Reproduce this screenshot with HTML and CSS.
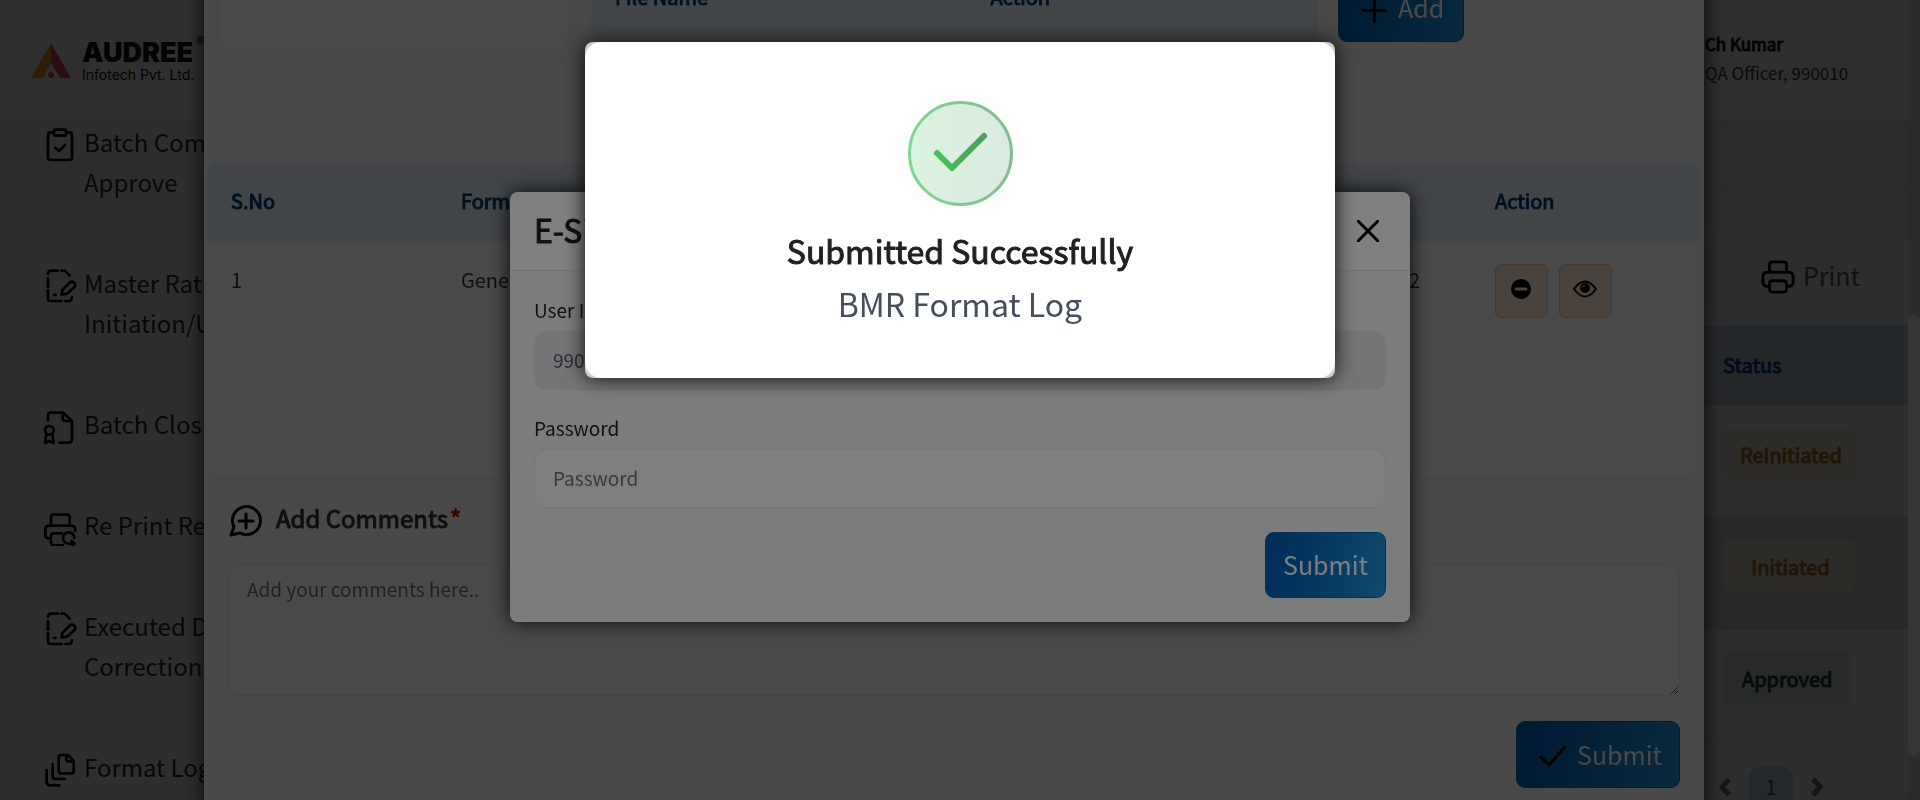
FILE: index.html
```html
<!DOCTYPE html>
<html lang="en">
<head>
<meta charset="utf-8">
<title>BMR Format Log</title>
<link rel="stylesheet" href="styles.css">
</head>
<body>
<svg class="defs" aria-hidden="true">
  <symbol id="draft-edit" viewBox="126 804 108 108">
    <path d="M144 822q0-10 10-10h20M184 812h10l15 15M144 835v25M144 870v24q0 8 3 8M154 903h31M196 903h10q9 0 10-11M162 885h5M185 884l2-14 22-22c9-8 22 3 14 14l-22 19z"/>
  </symbol>
</svg>
<div class="app">
  <header class="topbar">
    <div class="brand">
      <svg class="brand-mark" viewBox="0 0 40 35"><path d="M20 0L0 35h12l8-15z" fill="#e88a2a"/><path d="M20 0l20 35H29L20 20z" fill="#d23c55"/><circle cx="20" cy="32" r="3" fill="#d23c55"/></svg>
      <div class="brand-text"><strong>AUDREE</strong><span>Infotech Pvt. Ltd.</span></div>
      <sup class="brand-reg">®</sup>
    </div>
    <div class="user"><b>Ch Kumar</b><span>QA Officer, 990010</span></div>
  </header>
  <div class="columns">
    <nav class="sidebar">
      <a href="#"><svg viewBox="126 381 108 108"><path d="M158 397h-6q-8 0-8 8v67q0 8 8 8h56q8 0 8-8v-67q0-8-8-8h-6M167 389h26q5 0 5 5v8q0 5-5 5h-26q-5 0-5-5v-8q0-5 5-5zM166 443l11 10 18-18"/></svg><span>Batch Completion<br>Approve</span></a>
      <a href="#"><svg><use href="#draft-edit"/></svg><span>Master Ratio<br>Initiation/Update</span></a>
      <a href="#"><svg viewBox="126 25 108 108"><path d="M144 60V44q0-8 8-8h38l26 25v55q0 10-10 10h-28M188 36v17q0 8 8 8h20M139 101l-4 26 13-6 13 6-4-26"/><circle cx="148" cy="89" r="13"/></svg><span>Batch Closing</span></a>
      <a href="#"><svg viewBox="126 327 108 108"><path d="M153 373v-24q0-8 8-8h40q8 0 8 8v24M149 412q-13 0-13-11v-15q0-12 12-12h64q14 0 14 12v4M188 433h-27q-8 0-8-8v-20q0-8 8-8h24M223 411a17 17 0 1 0-16 17h16M215 420l9 8-9 9"/></svg><span>Re Print Report</span></a>
      <a href="#"><svg><use href="#draft-edit"/></svg><span>Executed Data<br>Correction</span></a>
      <a href="#"><svg viewBox="126 1058 108 108"><path d="M184 1067h20l17 17v30q0 8-8 8h-29q-8 0-8-8v-39q0-8 8-8zM199 1067v12q0 7 7 7h15M158 1094v36q0 9 9 9h28M140 1112v36q0 10 10 10h28"/></svg><span>Format Log</span></a>
    </nav>
    <main class="content">
      <div class="crumb"></div>
      <section class="card">
        <div class="card-tools">
          <span class="tool"></span>
          <button class="tool print" type="button"><svg viewBox="0 0 36 36"><path d="M9 13V5q0-3 3-3h12q3 0 3 3v8M7 28q-5 0-5-5v-5q0-5 5-5h22q5 0 5 5v5q0 5-5 5M12 22h12q3 0 3 3v6q0 3-3 3H12q-3 0-3-3v-6q0-3 3-3z"/></svg>Print</button>
        </div>
        <table class="log">
          <thead><tr><td></td><th>Status</th></tr></thead>
          <tbody>
            <tr><td></td><td><span class="badge wide amber">ReInitiated</span></td></tr>
            <tr><td></td><td><span class="badge wide amber">Initiated</span></td></tr>
            <tr><td></td><td><span class="badge green">Approved</span></td></tr>
          </tbody>
        </table>
        <div class="pager">
          <button type="button" aria-label="Previous"><svg viewBox="0 0 14 22"><path d="M11 3L4 11l7 8"/></svg></button>
          <button type="button" class="current">1</button>
          <button type="button" aria-label="Next"><svg viewBox="0 0 14 22"><path d="M3 3l7 8-7 8"/></svg></button>
        </div>
      </section>
    </main>
  </div>
  <div class="scrollbar"><i></i></div>
</div>

<div class="layer layer-form">
  <section class="dialog form-dialog">
    <div class="upload">
      <div class="drop"></div>
      <table class="files"><thead><tr><th>File Name</th><th>Action</th></tr></thead></table>
      <button class="btn add" type="button"><svg viewBox="0 0 24 24"><path d="M12 1v22M1 12h22"/></svg>Add</button>
    </div>
    <div class="grid-wrap">
      <table class="grid">
        <thead><tr><th>S.No</th><th>Format</th><td></td><td></td><th>Action</th></tr></thead>
        <tbody><tr><td>1</td><td>General</td><td></td><td class="end">2</td>
          <td class="acts-cell"><div class="acts">
            <button type="button" aria-label="Remove"><svg viewBox="0 0 24 24"><circle cx="12" cy="12" r="10"/><path d="M7 12h10" class="bar"/></svg></button>
            <button type="button" aria-label="View"><svg viewBox="0 0 24 24"><path class="line" d="M1 12q11-15 22 0-11 15-22 0z"/><circle cx="12" cy="11" r="5"/><path class="glint" d="M9 10q1-2 3-2"/></svg></button>
          </div></td></tr></tbody>
      </table>
    </div>
    <div class="comments">
      <label class="comments-title" for="comments"><svg viewBox="0 0 36 36"><path d="M3 32l3-8a14 14 0 1 1 6 6zM18 11v14M11 18h14"/></svg>Add Comments<em>*</em></label>
      <textarea id="comments" placeholder="Add your comments here.."></textarea>
      <button class="btn" type="button"><svg class="tick" viewBox="0 0 28 24"><path d="M2 13l8 8L26 3"/></svg>Submit</button>
    </div>
  </section>
</div>

<div class="layer layer-sign">
  <form class="dialog sign-dialog">
    <div class="sign-head"><h2>E-Sign</h2><button type="button" aria-label="Close"><svg viewBox="0 0 22 22"><path d="M1 1l20 20M21 1L1 21"/></svg></button></div>
    <div class="sign-body">
      <label for="user">User ID</label>
      <input id="user" type="text" value="990010" disabled>
      <label for="pass">Password</label>
      <input id="pass" type="password" placeholder="Password">
      <button class="btn" type="button">Submit</button>
    </div>
  </form>
</div>

<div class="layer layer-done">
  <section class="dialog done-dialog"><div class="done-card">
    <svg class="done-icon" viewBox="0 0 105 105">
      <defs>
        <linearGradient id="ring" x1="0" x2="1" y1="0" y2="0"><stop offset="0" stop-color="#7fd694"/><stop offset="1" stop-color="#85b98f"/></linearGradient>
        <linearGradient id="fill" x1="0" x2="1" y1="0" y2="0"><stop offset="0" stop-color="#dbf3df"/><stop offset="1" stop-color="#d9eadf"/></linearGradient>
        <linearGradient id="check" x1="0" x2="1" y1="0" y2="0"><stop offset="0" stop-color="#46c35c"/><stop offset="1" stop-color="#4a9e5c"/></linearGradient>
      </defs>
      <circle cx="52.500" cy="52.500" r="51" fill="url(#fill)" stroke="url(#ring)" stroke-width="3"/>
      <path d="M29 52l15 15 32-32" fill="none" stroke="url(#check)" stroke-width="6" stroke-linecap="round" stroke-linejoin="round"/>
    </svg>
    <h1>Submitted Successfully</h1>
    <p>BMR Format Log</p>
  </div></section>
</div>
</body>
</html>
```
FILE: styles.css
```css
* { box-sizing: border-box; }
html { overflow: hidden; }
body {
  margin: 0;
  height: 100vh;
  overflow: hidden;
  background: #dcdcdc;
  color: #222;
  font: 20px "Noto Sans CJK JP", "Noto Sans CJK SC", sans-serif;
}
button, input, textarea { font: inherit; }
button { cursor: pointer; }
svg { fill: none; stroke: #000; stroke-linecap: round; stroke-linejoin: round; flex: none; }
th, h1, h2 { font-weight: 400; -webkit-text-stroke: 1px currentColor; }
table { border-collapse: collapse; width: 100%; }
th { text-align: left; color: #003a78; }
.defs { position: absolute; width: 0; height: 0; }

/* Page */
.app { height: 100vh; overflow: hidden; padding-right: 12px; position: relative; }
.topbar { display: flex; justify-content: space-between; height: 121px; border-bottom: 1px solid #cbcbcb; background: #e0e0e0; }
.brand { display: flex; align-items: flex-start; padding: 43px 0 0 31px; font-family: Inter, sans-serif; color: #111; }
.brand-mark { width: 40px; height: 35px; stroke: none; margin-right: 11px; }
.brand-text { display: flex; flex-direction: column; margin-top: -6px; }
.brand-text strong { font-size: 27px; font-weight: 900; line-height: 32px; }
.brand-text span { font-size: 14px; line-height: 17px; margin-top: -3px; }
.brand-reg { font-size: 13px; line-height: 1; margin: -8px 0 0 2px; }
.user { display: flex; flex-direction: column; width: 203px; padding-top: 29px; font-size: 17px; line-height: 29px; }
.user b { font-weight: 400; color: #111; -webkit-text-stroke: 1px currentColor; }
.user span { color: #333; }
.columns { display: flex; }
.sidebar { width: 340px; padding-top: 1px; font-size: 24px; line-height: 40px; background: #dcdcdc; flex: none; }
.sidebar a { display: flex; align-items: flex-start; gap: 6px; padding: 0 0 61px 42px; color: #262626; text-decoration: none; white-space: nowrap; }
.sidebar svg { width: 36px; height: 36px; margin: 5px 0 -1px; stroke-width: 8px; }
.content { flex: 1; background: #d6d6d6; }
.crumb { height: 68px; border-bottom: 1px solid #c8c8c8; }
.card { margin-top: 36px; background: #dcdcdc; border-radius: 16px; }
.card-tools { display: flex; justify-content: flex-end; gap: 25px; padding: 18px 22px 17px; }
.tool { display: flex; align-items: center; gap: 8px; height: 66px; padding: 0 26px; border: 1px solid #cacaca; border-radius: 10px; background: none; font-size: 25px; line-height: 32px; color: #555; }
.print svg { width: 34px; height: 36px; margin-top: 4px; stroke-width: 3px; }
.print { padding: 0 25px 3px 26px; }
.log thead { background: #b3c0cb; height: 79px; }
.log th, .log td:last-child { width: 209px; padding: 0 24px; }
.log th { padding-bottom: 2px; }
.log tbody td:last-child { padding-bottom: 13px; }
.log tbody tr { height: 112px; border-bottom: 1px solid #cacaca; }
.log tbody tr:nth-child(2) { background: #c2c5cf; }
.badge { display: flex; width: max-content; align-items: center; justify-content: center; height: 53px; padding: 0 19px; border-radius: 8px; -webkit-text-stroke: 1px currentColor; }
.wide { min-width: 132px; padding: 0 14px 0 17px; }
.amber { background: #d6d2c6; color: #9a6416; }
.green { background: #c6d0c9; color: #103c22; }
.pager { display: flex; align-items: center; justify-content: flex-end; gap: 17px; padding: 25px 84px 0; }
.pager button { border: 0; background: none; padding: 0; }
.pager svg { width: 14px; height: 22px; stroke: #666; stroke-width: 5px; stroke-linecap: butt; stroke-linejoin: miter; display: block; }
.pager .current { width: 44px; height: 40px; border-radius: 10px; background: #b3c4d0; color: #004c7c; line-height: 32px; }
.scrollbar { position: absolute; top: 0; right: 0; bottom: 0; width: 12px; padding-top: 315px; background: #d0d0d0; }
.scrollbar i { display: block; height: 441px; border-radius: 6px; background: #fafffd; }

/* Stacked dialogs */
.layer { position: fixed; inset: 0; overflow: hidden; display: flex; justify-content: center; align-items: flex-start; }
.layer-form { background: rgba(0, 0, 0, .28); padding-right: 12px; }
.layer-sign { background: rgba(0, 0, 0, .42); padding-top: 192px; }
.layer-done { background: rgba(0, 0, 0, .5); padding-top: 42px; }
.dialog { width: 100%; background: #fff; border-radius: 8px; box-shadow: 0 0 20px rgba(0, 0, 0, .9); }
.btn { display: inline-flex; align-items: center; justify-content: center; height: 67px; padding: 0 17px 2px; border: 1px solid #0067b0; border-radius: 9px; background: linear-gradient(100deg, #0058b0, #0e74c2 50%, #1e94d6); color: #fff; font-size: 25px; line-height: 32px; }

.form-dialog { max-width: 1500px; min-height: calc(100vh + 60px); margin-top: -44px; padding: 0 3px; background: #fbfbfb; }
.upload { display: flex; align-items: flex-start; padding: 0 11px; margin-bottom: 109px; }
.drop { width: 352px; height: 97px; margin-right: 21px; border: 1px solid #efefef; border-radius: 14px; background: #fff; }
.files { width: 727px; }
.files th { height: 79px; width: 50%; padding: 2px 24px 0; background: #e3f2fd; }
.files th + th { padding-left: 36px; }
.add { margin: 19px 0 0 20px; padding: 0 19px 3px 23px; gap: 11px; }
.add svg { width: 25px; height: 25px; stroke-width: 3px; margin-top: 6px; }
.grid-wrap { border-radius: 12px; overflow: hidden; background: #fff; border-bottom: 1px solid #ececec; }
.grid { table-layout: fixed; }
.grid thead { background: #e3f2fd; height: 79px; }
.grid th, .grid td { padding: 0 24px; width: 230px; }
.grid th { padding-bottom: 2px; }
.grid td:nth-child(3) { width: auto; }
.grid tbody td { height: 236px; padding-top: 24px; vertical-align: top; color: #333; }
.grid .end { text-align: right; padding-right: 51px; }
.grid tbody .acts-cell { padding-top: 23px; }
.acts { display: flex; gap: 11px; }
.acts button { display: flex; align-items: center; justify-content: center; width: 53px; height: 54px; border: 1px solid #efc9a4; border-radius: 6px; background: #fee4d2; padding: 0 2px 4px 0; }
.acts svg { width: 24px; height: 24px; fill: #000; stroke: none; }
.acts .bar { stroke: #fee4d2; stroke-width: 3px; }
.acts .line { fill: none; stroke: #000; stroke-width: 2px; }
.acts .glint { stroke: #fee4d2; fill: none; stroke-width: 1px; }
.comments { display: flex; flex-direction: column; align-items: flex-end; padding: 22px 21px; }
.comments-title { align-self: stretch; display: flex; align-items: flex-start; height: 40px; margin-bottom: 24px; font-size: 24px; -webkit-text-stroke: 1px currentColor; color: #333; }
.comments-title svg { width: 36px; height: 36px; margin: 3px 12px 0 0; stroke-width: 3px; }
.comments-title em { font-style: normal; color: #e00000; margin-left: 2px; }
textarea { display: block; width: 100%; height: 132px; margin-bottom: 25px; padding: 10px 18px; border: 1px solid #ececec; border-radius: 14px; background: #fff; resize: vertical; }
textarea, .sign-body label, .sign-body input { font-size: 19px; }
::placeholder { color: #6c757d; opacity: 1; }
.comments .btn { gap: 10px; padding-left: 22px; }
.tick { width: 28px; height: 24px; stroke-width: 3px; margin-top: 4px; }

.sign-dialog { max-width: 900px; }
.sign-head { display: flex; align-items: center; justify-content: space-between; height: 79px; padding: 0 31px 0 24px; border-bottom: 1px solid #e6e6e6; }
.sign-head h2 { margin: 0; font-size: 32px; line-height: 40px; padding-bottom: 4px; }
.sign-head button { border: 0; background: none; padding: 0; }
.sign-head svg { display: block; width: 22px; height: 22px; stroke-width: 3px; }
.sign-body { display: flex; flex-direction: column; background: #f6faf8; border-radius: 0 0 8px 8px; padding: 24px; }
.sign-body label { margin-bottom: 7px; line-height: 29px; }
.sign-body input { height: 59px; margin-bottom: 23px; padding: 0 18px 2px; border: 1px solid #e8ebea; border-radius: 12px; background: #fff; }
.sign-body input:disabled { background: #e9ebee; color: #555c66; }
.sign-body .btn { align-self: flex-end; height: 66px; margin-top: 1px; }

.done-dialog { max-width: 750px; background: #ccc; }
.done-card { background: #fff; border-radius: 16px; padding: 59px 24px 52px; text-align: center; }
.done-icon { display: block; width: 105px; height: 105px; margin: 0 auto 21px; }
.done-card h1 { margin: 0 0 7px; font-size: 32px; line-height: 46px; color: #212121; }
.done-card p { margin: 0; font-size: 32px; line-height: 46px; color: #444e5c; }
```
